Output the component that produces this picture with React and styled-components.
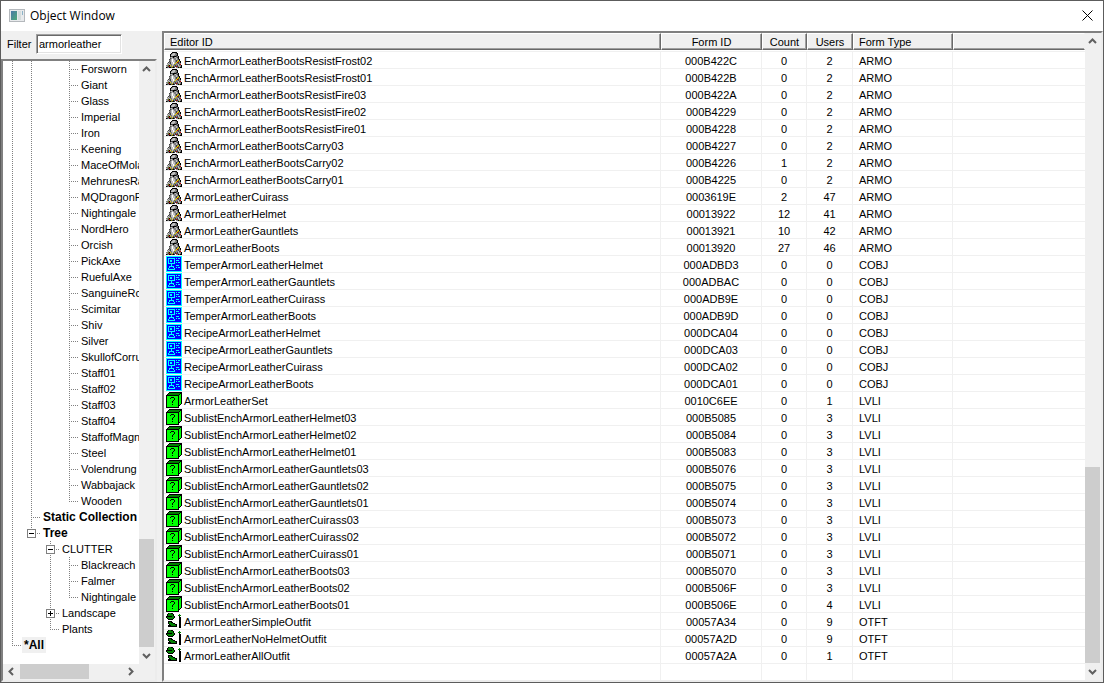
import { useState } from "react";
import styled, { createGlobalStyle, css } from "styled-components";

const TREE = [
  ...[
    "Forsworn",
    "Giant",
    "Glass",
    "Imperial",
    "Iron",
    "Keening",
    "MaceOfMolagBal",
    "MehrunesRazor",
    "MQDragonPriest",
    "Nightingale",
    "NordHero",
    "Orcish",
    "PickAxe",
    "RuefulAxe",
    "SanguineRose",
    "Scimitar",
    "Shiv",
    "Silver",
    "SkullofCorruption",
    "Staff01",
    "Staff02",
    "Staff03",
    "Staff04",
    "StaffofMagnus",
    "Steel",
    "Volendrung",
    "Wabbajack",
  ].map((label) => ({ label, guides: ["line", "line", "none", "tee"] })),
  { label: "Wooden", guides: ["line", "line", "none", "end"] },
  { label: "Static Collection", guides: ["line", "tee"], bold: true },
  { label: "Tree", guides: ["line", "end"], bold: true, toggle: "minus" },
  { label: "CLUTTER", guides: ["line", "none", "tee"], toggle: "minus" },
  { label: "Blackreach", guides: ["line", "none", "line", "tee"] },
  { label: "Falmer", guides: ["line", "none", "line", "tee"] },
  { label: "Nightingale", guides: ["line", "none", "line", "end"] },
  { label: "Landscape", guides: ["line", "none", "tee"], toggle: "plus" },
  { label: "Plants", guides: ["line", "none", "end"] },
  { label: "*All", guides: ["end"], bold: true, selected: true },
];

const ROWS = [
  ["EnchArmorLeatherBootsResistFrost02", "000B422C", 0, 2, "ARMO"],
  ["EnchArmorLeatherBootsResistFrost01", "000B422B", 0, 2, "ARMO"],
  ["EnchArmorLeatherBootsResistFire03", "000B422A", 0, 2, "ARMO"],
  ["EnchArmorLeatherBootsResistFire02", "000B4229", 0, 2, "ARMO"],
  ["EnchArmorLeatherBootsResistFire01", "000B4228", 0, 2, "ARMO"],
  ["EnchArmorLeatherBootsCarry03", "000B4227", 0, 2, "ARMO"],
  ["EnchArmorLeatherBootsCarry02", "000B4226", 1, 2, "ARMO"],
  ["EnchArmorLeatherBootsCarry01", "000B4225", 0, 2, "ARMO"],
  ["ArmorLeatherCuirass", "0003619E", 2, 47, "ARMO"],
  ["ArmorLeatherHelmet", "00013922", 12, 41, "ARMO"],
  ["ArmorLeatherGauntlets", "00013921", 10, 42, "ARMO"],
  ["ArmorLeatherBoots", "00013920", 27, 46, "ARMO"],
  ["TemperArmorLeatherHelmet", "000ADBD3", 0, 0, "COBJ"],
  ["TemperArmorLeatherGauntlets", "000ADBAC", 0, 0, "COBJ"],
  ["TemperArmorLeatherCuirass", "000ADB9E", 0, 0, "COBJ"],
  ["TemperArmorLeatherBoots", "000ADB9D", 0, 0, "COBJ"],
  ["RecipeArmorLeatherHelmet", "000DCA04", 0, 0, "COBJ"],
  ["RecipeArmorLeatherGauntlets", "000DCA03", 0, 0, "COBJ"],
  ["RecipeArmorLeatherCuirass", "000DCA02", 0, 0, "COBJ"],
  ["RecipeArmorLeatherBoots", "000DCA01", 0, 0, "COBJ"],
  ["ArmorLeatherSet", "0010C6EE", 0, 1, "LVLI"],
  ["SublistEnchArmorLeatherHelmet03", "000B5085", 0, 3, "LVLI"],
  ["SublistEnchArmorLeatherHelmet02", "000B5084", 0, 3, "LVLI"],
  ["SublistEnchArmorLeatherHelmet01", "000B5083", 0, 3, "LVLI"],
  ["SublistEnchArmorLeatherGauntlets03", "000B5076", 0, 3, "LVLI"],
  ["SublistEnchArmorLeatherGauntlets02", "000B5075", 0, 3, "LVLI"],
  ["SublistEnchArmorLeatherGauntlets01", "000B5074", 0, 3, "LVLI"],
  ["SublistEnchArmorLeatherCuirass03", "000B5073", 0, 3, "LVLI"],
  ["SublistEnchArmorLeatherCuirass02", "000B5072", 0, 3, "LVLI"],
  ["SublistEnchArmorLeatherCuirass01", "000B5071", 0, 3, "LVLI"],
  ["SublistEnchArmorLeatherBoots03", "000B5070", 0, 3, "LVLI"],
  ["SublistEnchArmorLeatherBoots02", "000B506F", 0, 3, "LVLI"],
  ["SublistEnchArmorLeatherBoots01", "000B506E", 0, 4, "LVLI"],
  ["ArmorLeatherSimpleOutfit", "00057A34", 0, 9, "OTFT"],
  ["ArmorLeatherNoHelmetOutfit", "00057A2D", 0, 9, "OTFT"],
  ["ArmorLeatherAllOutfit", "00057A2A", 0, 1, "OTFT"],
];

// 16x16 pixel icons, one letter per pixel
const COLORS = {
  k: "#000000",
  d: "#404040",
  g: "#808080",
  s: "#c0c0c0",
  w: "#ffffff",
  o: "#808000",
  r: "#c00000",
  y: "#e8d800",
  b: "#0000ff",
  c: "#00ffff",
  G: "#00ff00",
  D: "#008000",
};

const ICONS = {
  ARMO: [
    "......kkkkk.....",
    ".....kgssgdk....",
    "....kgsssggk....",
    "....ksssggdk....",
    "....kddkkkdgk...",
    "....gsgkgsgdk...",
    "....dgsgggsgk...",
    "...dgswsggsgdk..",
    "...ggswssgdgyk..",
    "...dgswssgdyogk.",
    "..dgdsswsgyrdgk.",
    ".gsgdsswsyggdgg.",
    ".sgsggssogggsdr.",
    "ggokygsggdgdsggk",
    "sgdrggydgdrdgsgk",
    "kdgkkodkd.ggkokk",
  ],
  COBJ: [
    "cccccccccccccccc",
    "cbbbbbbbbbbbbbbc",
    "cbcccccccbcbccbc",
    "cbcbbbbbcbbbbbbc",
    "cbcbccbbcbcccbbc",
    "cbcbccbbcbbbbbbc",
    "cbcbbbbbcbcbccbc",
    "cbcccccccbbbbbbc",
    "cbbbbcbbbbbbbbbc",
    "cbbbbcbbbbcccbbc",
    "cbbcccccbbbbbbbc",
    "cbbcbbbcbbcbccbc",
    "cbcbbbbbcbbbbbbc",
    "cbcccccccbbbbbbc",
    "cbbbbbbbbbbbbbbc",
    "cccccccccccccccc",
  ],
  LVLI: [
    "...kkkkkkkkkkkkk",
    "..kDDDDDDDDDDDkk",
    ".kDDDDDDDDDDDkGk",
    "kkkkkkkkkkkkkGGk",
    "kGGGGGGGGGGGkGGk",
    "kGGGGkkkGGGGkGGk",
    "kGGGkGGGkGGGkGGk",
    "kGGGGGGGkGGGkGGk",
    "kGGGGGGkGGGGkGGk",
    "kGGGGGkGGGGGkGGk",
    "kGGGGGkGGGGGkGGk",
    "kGGGGGGGGGGGkGGk",
    "kGGGGGkGGGGGkGk.",
    "kGGGGGGGGGGGkk..",
    "kGGGGGGGGGGGk...",
    "kkkkkkkkkkkkk...",
  ],
  OTFT: [
    "..kDDkk.........",
    ".kDDDDDk.....D..",
    ".kDDDDDk....DDD.",
    "kkkkkkDDk....k..",
    "kDDDDDDDk....kk.",
    ".kDDDDDk.....kk.",
    "..kkkkk......kk.",
    ".............kk.",
    "..kkkk.......kk.",
    "..kDDkk......kk.",
    "..kDDDDkk....kk.",
    "...kDDDDDkk..kk.",
    "..kkkDDDDDk..kk.",
    "..kkkkkkkkk..kk.",
    ".............kk.",
    "................",
  ],
};

const PixelIcon = ({ type }) => (
  <StPixelIcon viewBox='0 0 16 16' aria-hidden='true'>
    {ICONS[type].map((line, y) =>
      [...line].map((c, x) =>
        c === "." ? null : (
          <rect key={`${x}-${y}`} x={x} y={y} width='1' height='1' fill={COLORS[c]} />
        )
      )
    )}
  </StPixelIcon>
);

const ARROWS = {
  up: "M1 6 L4.5 2.5 L8 6",
  down: "M1 3 L4.5 6.5 L8 3",
  left: "M6 1 L2.5 4.5 L6 8",
  right: "M3 1 L6.5 4.5 L3 8",
};

const ArrowButton = ({ dir }) => (
  <StArrowButton type='button' aria-label={`Scroll ${dir}`}>
    <svg width='9' height='9' viewBox='0 0 9 9'>
      <path d={ARROWS[dir]} fill='none' stroke='#606060' strokeWidth='2' />
    </svg>
  </StArrowButton>
);

const ScrollBar = ({ horizontal, size }) => (
  <StScrollBar $horizontal={horizontal}>
    <ArrowButton dir={horizontal ? "left" : "up"} />
    <StTrack $horizontal={horizontal}>
      <StThumb $size={size} />
    </StTrack>
    <ArrowButton dir={horizontal ? "right" : "down"} />
  </StScrollBar>
);

const TreeItem = ({ label, guides, bold, toggle, selected }) => (
  <StTreeItem>
    {guides.map((kind, i) => (
      <StGuide key={i} $kind={kind}>
        {toggle && i === guides.length - 1 && (
          <StToggle type='button' aria-label={`Toggle ${label}`}>
            <svg width='7' height='7' viewBox='0 0 7 7' shapeRendering='crispEdges'>
              <path d={toggle === "plus" ? "M1 3h5v1h-5z M3 1h1v5h-1z" : "M1 3h5v1h-5z"} />
            </svg>
          </StToggle>
        )}
      </StGuide>
    ))}
    <StTreeLabel $bold={bold} $selected={selected}>
      {label}
    </StTreeLabel>
  </StTreeItem>
);

const App = () => {
  const [filter, setFilter] = useState("armorleather");

  return (
    <>
      <GlobalStyle />
      <StWindow>
        <StTitleBar>
          <svg width='16' height='14' viewBox='0 0 16 14' aria-hidden='true'>
            <defs>
              <linearGradient id='pane' x1='0' y1='0' x2='1' y2='1'>
                <stop offset='0' stopColor='#4a78a8' />
                <stop offset='1' stopColor='#4faa78' />
              </linearGradient>
            </defs>
            <rect x='0.5' y='0.5' width='15' height='12' fill='#e8eaec' stroke='#b4b8bc' />
            <rect x='2' y='2' width='6' height='9' fill='url(#pane)' />
            <rect x='9' y='2' width='3' height='9' fill='#d4dcdc' />
            <rect x='13' y='2' width='1' height='4' fill='#8cb4c8' />
          </svg>
          <StTitle>Object Window</StTitle>
          <StClose type='button' aria-label='Close'>
            <svg width='11' height='11' viewBox='0 0 11 11'>
              <path d='M0.5 0.5 L10.5 10.5 M10.5 0.5 L0.5 10.5' stroke='#000' fill='none' />
            </svg>
          </StClose>
        </StTitleBar>
        <StBody>
          <StSide>
            <StFilter>
              <label htmlFor='filter'>Filter</label>
              <StInput
                id='filter'
                type='text'
                value={filter}
                onChange={(e) => setFilter(e.target.value)}
              />
            </StFilter>
            <StPanel $tree>
              <StTree>
                {TREE.map((item, i) => (
                  <TreeItem key={i} {...item} />
                ))}
              </StTree>
              <ScrollBar size='19%' />
              <ScrollBar horizontal size='68%' />
            </StPanel>
          </StSide>
          <StPanel>
            <StTable>
              <colgroup>
                <StCol $width='497px' />
                <StCol $width='101px' />
                <StCol $width='45px' />
                <StCol $width='46px' />
                <StCol $width='100px' />
                <col />
              </colgroup>
              <thead>
                <tr>
                  <StTh>
                    <StSort type='button'>Editor ID</StSort>
                  </StTh>
                  <StTh>
                    <StSort type='button' $center>Form ID</StSort>
                  </StTh>
                  <StTh>
                    <StSort type='button' $center>Count</StSort>
                  </StTh>
                  <StTh>
                    <StSort type='button' $center>Users</StSort>
                  </StTh>
                  <StTh>
                    <StSort type='button'>Form Type</StSort>
                  </StTh>
                  <StTh>
                    <StHeadFill />
                  </StTh>
                </tr>
              </thead>
              <tbody>
                {ROWS.map(([editorId, formId, count, users, type]) => (
                  <tr key={formId}>
                    <StTd>
                      <StName>
                        <PixelIcon type={type} />
                        <StText>{editorId}</StText>
                      </StName>
                    </StTd>
                    <StTd $center>
                      <StText>{formId}</StText>
                    </StTd>
                    <StTd $center>
                      <StText>{count}</StText>
                    </StTd>
                    <StTd $center>
                      <StText>{users}</StText>
                    </StTd>
                    <StTd $indent>
                      <StText>{type}</StText>
                    </StTd>
                    <StTd $last />
                  </tr>
                ))}
                <StRest>
                  <td />
                  <td />
                  <td />
                  <td />
                  <td />
                </StRest>
              </tbody>
            </StTable>
            <ScrollBar size='32%' />
          </StPanel>
        </StBody>
      </StWindow>
    </>
  );
};

export default App;

const GlobalStyle = createGlobalStyle`
  * {
    box-sizing: border-box;
  }
  body {
    margin: 0;
    background: #f0f0f0;
    color: #000;
    font-family: "Liberation Sans", Arial, sans-serif;
    font-size: 11px;
    line-height: 16px;
  }
  button,
  input {
    margin: 0;
    padding: 0;
    border: 0;
    background: none;
    color: inherit;
    font: inherit;
  }
  svg {
    display: block;
  }
`;

const StWindow = styled.div`
  display: flex;
  flex-direction: column;
  min-height: 100vh;
  border: 1px solid #5c5c5c;
`;

const StTitleBar = styled.header`
  display: flex;
  align-items: center;
  height: 30px;
  padding: 0 10px 0 8px;
  background: #fff;
`;

const StTitle = styled.h1`
  flex: 1;
  margin: 0 0 0 5px;
  font-family: "Open Sans", "Noto Sans", sans-serif;
  font-size: 12px;
  font-weight: 400;
`;

const StClose = styled.button`
  padding: 0 0 2px;
`;

const StBody = styled.main`
  flex: 1;
  display: grid;
  grid-template-columns: 156px minmax(0, 1fr);
  gap: 5px;
`;

const StSide = styled.div`
  display: flex;
  flex-direction: column;
  min-width: 0;
`;

const StFilter = styled.div`
  display: grid;
  grid-template-columns: 29px 86px;
  align-items: center;
  height: 28px;
  padding: 0 0 2px 6px;
`;

const StInput = styled.input`
  height: 20px;
  padding: 0 2px;
  background: #fff;
  border: 1px solid;
  border-color: #a0a0a0 #fff #fff #a0a0a0;
  box-shadow: inset 1px 1px 0 #696969, inset -1px -1px 0 #e3e3e3;
  outline: none;
`;

const StPanel = styled.section`
  flex: 1;
  display: grid;
  grid-template-columns: minmax(0, 1fr) 16px;
  ${(props) => props.$tree && "grid-template-rows: 1fr 16px;"}
  min-width: 0;
  background: #f0f0f0;
  border: 2px solid;
  border-color: #808080 #ececec #ececec #808080;
`;

const StTree = styled.ul`
  margin: 0;
  padding: 0;
  overflow: hidden;
  list-style: none;
  background: #fff;
`;

const StTreeItem = styled.li`
  display: flex;
  height: 16px;
  white-space: nowrap;
`;

const dotsDown = "repeating-linear-gradient(#808080 0 1px, transparent 1px 2px)";
const dotsAcross =
  "repeating-linear-gradient(90deg, #808080 0 1px, transparent 1px 2px)";

const guides = {
  none: "none",
  line: `${dotsDown} 9px 0 / 1px 16px no-repeat`,
  tee: `${dotsDown} 9px 0 / 1px 16px no-repeat, ${dotsAcross} 9px 8px / 10px 1px no-repeat`,
  end: `${dotsDown} 9px 0 / 1px 8px no-repeat, ${dotsAcross} 9px 8px / 10px 1px no-repeat`,
};

const StGuide = styled.span`
  flex: none;
  width: 19px;
  height: 16px;
  padding: 4px 5px 0;
  background: ${(props) => guides[props.$kind]};
`;

const StToggle = styled.button`
  display: block;
  width: 9px;
  height: 9px;
  background: #fff;
  border: 1px solid #808080;
`;

const StTreeLabel = styled.span`
  padding: 0 2px;
  background: ${(props) => (props.$selected ? "#f0f0f0" : "none")};
  font-size: ${(props) => (props.$bold ? "12px" : "11px")};
  font-weight: ${(props) => (props.$bold ? 700 : 400)};
`;

const StScrollBar = styled.div`
  display: flex;
  flex-direction: ${(props) => (props.$horizontal ? "row" : "column")};
  padding: ${(props) => (props.$horizontal ? "0 0 1px" : "0 1px 0 0")};
  background: #f0f0f0;
`;

const StArrowButton = styled.button`
  flex: 0 0 17px;
  display: flex;
  align-items: center;
  justify-content: center;
`;

const StTrack = styled.div`
  flex: 1;
  display: flex;
  flex-direction: ${(props) => (props.$horizontal ? "row" : "column")};
  justify-content: ${(props) => (props.$horizontal ? "flex-start" : "flex-end")};
`;

const StThumb = styled.div`
  flex: 0 0 ${(props) => props.$size};
  background: #cdcdcd;
`;

const StTable = styled.table`
  width: 100%;
  table-layout: fixed;
  border-spacing: 0;
  background: #fff;
`;

const StCol = styled.col`
  width: ${(props) => props.$width};
`;

const StTh = styled.th`
  height: 19px;
  padding: 0 0 1px;
  border-bottom: 1px solid #f0f0f0;
  font-weight: 400;
`;

const headCell = css`
  display: block;
  width: 100%;
  height: 17px;
  background: #f0f0f0;
`;

const StSort = styled.button`
  ${headCell}
  padding: 2px 5px 0;
  border: 1px solid;
  border-color: #fff #696969 #696969 #fff;
  box-shadow: inset -1px -1px 0 #a0a0a0;
  line-height: 13px;
  text-align: ${(props) => (props.$center ? "center" : "left")};
`;

const StHeadFill = styled.div`
  ${headCell}
  border: 1px solid;
  border-color: #fff #f0f0f0 #696969 #fff;
  box-shadow: inset 0 -1px 0 #a0a0a0;
`;

const StTd = styled.td`
  height: 17px;
  padding: 0 0 0 ${(props) => (props.$indent ? "6px" : "0")};
  border-bottom: 1px solid #f0f0f0;
  border-right: ${(props) => (props.$last ? "0" : "1px solid #f0f0f0")};
  text-align: ${(props) => (props.$center ? "center" : "left")};
`;

const StName = styled.span`
  display: flex;
  align-items: center;
  gap: 2px;
  padding-left: 2px;
`;

const StText = styled.span`
  display: block;
  padding-top: 2px;
  line-height: 14px;
  white-space: nowrap;
`;

const StPixelIcon = styled.svg`
  flex: none;
  width: 16px;
  height: 16px;
  shape-rendering: crispEdges;
`;

const StRest = styled.tr`
  height: 16px;
  td {
    padding: 0;
    border-right: 1px solid #f0f0f0;
  }
`;
